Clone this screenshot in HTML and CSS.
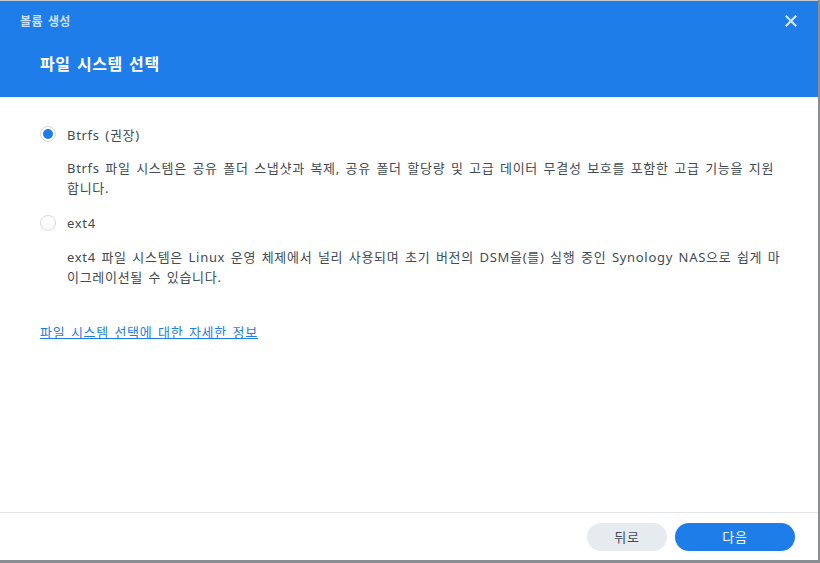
FILE: index.html
```html
<!DOCTYPE html>
<html lang="ko">
<head>
    <meta charset="UTF-8">
    <meta name="viewport" content="width=device-width, initial-scale=1.0">
    <title>볼륨 생성</title>
    <link rel="stylesheet" href="styles.css">
</head>
<body>
    <div class="dialog">
        <div class="header">
            <div class="header-top">
                <span class="window-title">볼륨 생성</span>
                <svg class="close" width="12" height="12" viewBox="0 0 12 12">
                    <path d="M1.5 1.5 L10.5 10.5 M10.5 1.5 L1.5 10.5" stroke="#cfe3fb" stroke-width="2.2" stroke-linecap="square"/>
                </svg>
            </div>
            <div class="step-title">파일 시스템 선택</div>
        </div>

        <div class="body">
            <div class="option">
                <div class="option-row">
                    <span class="radio checked"></span>
                    <span class="option-label">Btrfs (권장)</span>
                </div>
                <p class="option-desc">Btrfs 파일 시스템은 공유 폴더 스냅샷과 복제, 공유 폴더 할당량 및 고급 데이터 무결성 보호를 포함한 고급 기능을 지원합니다.</p>
            </div>
            <div class="option">
                <div class="option-row">
                    <span class="radio"></span>
                    <span class="option-label">ext4</span>
                </div>
                <p class="option-desc">ext4 파일 시스템은 Linux 운영 체제에서 널리 사용되며 초기 버전의 DSM을(를) 실행 중인 Synology NAS으로 쉽게 마이그레이션될 수 있습니다.</p>
            </div>
            <a class="more-link" href="#">파일 시스템 선택에 대한 자세한 정보</a>
        </div>

        <div class="footer">
            <button class="btn btn-back">뒤로</button>
            <button class="btn btn-next">다음</button>
        </div>
    </div>
</body>
</html>
```
FILE: styles.css
```css
html, body {
    margin: 0;
    height: 100%;
}
body {
    font-family: 'Noto Sans', 'Noto Sans CJK KR', sans-serif;
    background-color: #8a8d91;
    color: #414b55;
    font-size: 13px;
    letter-spacing: 0.7px;
    word-spacing: 1.5px;
}
.dialog {
    width: 818px;
    height: 560px;
    background-color: #fff;
    border-top: 1px solid #c7cacd;
    box-sizing: border-box;
    display: flex;
    flex-direction: column;
}
.header {
    background-color: #1e7de8;
    height: 96px;
    box-sizing: border-box;
    padding: 10px 20px 0 20px;
}
.header-top {
    display: flex;
    justify-content: space-between;
    align-items: center;
    height: 20px;
}
.window-title {
    color: #c8dffa;
    font-size: 12px;
    font-weight: bold;
    letter-spacing: 0.4px;
}
.close {
    margin-right: 1px;
}
.step-title {
    color: #fff;
    font-size: 16px;
    font-weight: bold;
    margin-top: 20px;
    padding-left: 20px;
    letter-spacing: 0.6px;
}
.body {
    flex: 1;
    padding: 25px 40px 0 40px;
}
.option {
    margin-bottom: 13px;
}
.option-row {
    display: flex;
    align-items: center;
    height: 24px;
}
.radio {
    width: 16px;
    height: 16px;
    border: 1px solid #d4dae0;
    border-radius: 50%;
    box-sizing: border-box;
    display: flex;
    align-items: center;
    justify-content: center;
    margin-right: 10px;
    background: #fff;
}
.radio.checked::after {
    content: '';
    width: 10px;
    height: 10px;
    border-radius: 50%;
    background-color: #1e7de8;
}
.option-label {
    margin-left: 1px;
}
.option-desc {
    margin: 13px 0 0 27px;
    line-height: 19.5px;
    width: 716px;
    word-break: break-all;
}
.more-link {
    display: inline-block;
    margin-top: 22px;
    color: #1e7de8;
    text-decoration: underline;
}
.footer {
    border-top: 1px solid #e2e4e6;
    height: 47px;
    display: flex;
    justify-content: flex-end;
    align-items: center;
    gap: 8px;
    padding-right: 23px;
}
.btn {
    height: 28px;
    border: none;
    border-radius: 14px;
    font-family: inherit;
    font-size: 13px;
    letter-spacing: inherit;
    cursor: pointer;
}
.btn-back {
    width: 80px;
    background-color: #e6ebf0;
    color: #414b55;
}
.btn-next {
    width: 120px;
    background-color: #1e7de8;
    color: #fff;
}
```
